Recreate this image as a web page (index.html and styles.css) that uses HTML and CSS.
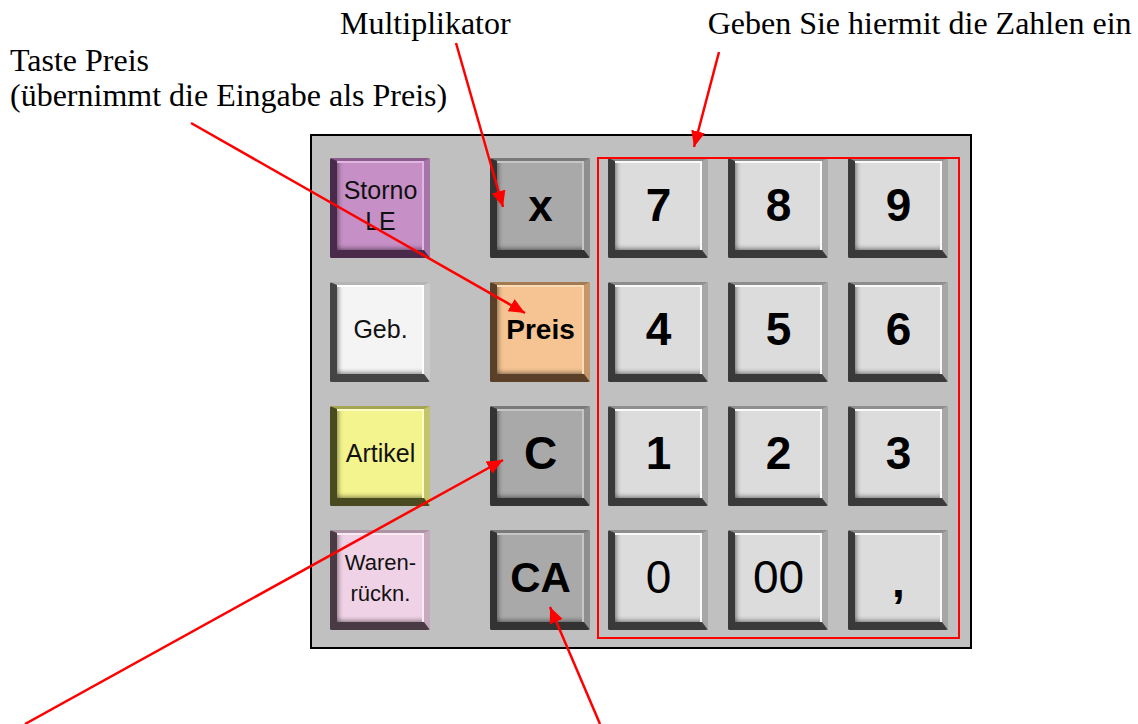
FILE: index.html
```html
<!DOCTYPE html>
<html lang="de">
<head>
    <meta charset="UTF-8">
    <meta name="viewport" content="width=device-width, initial-scale=1.0">
    <title>Kassentastatur</title>
    <link rel="stylesheet" href="styles.css">
</head>
<body>
    <div class="page">
        <div class="notes-top">
            <span class="note">Multiplikator</span>
            <span class="note note-digits">Geben Sie hiermit die Zahlen ein</span>
        </div>
        <div class="note note-price">Taste Preis<br>(übernimmt die Eingabe als Preis)</div>

        <div class="panel">
            <div class="keys keys-func">
                <div class="key key-storno">Storno<br>LE</div>
                <div class="key key-op key-mul">x</div>
                <div class="key key-geb">Geb.</div>
                <div class="key key-preis">Preis</div>
                <div class="key key-artikel">Artikel</div>
                <div class="key key-op key-c">C</div>
                <div class="key key-waren">Waren-<br>rückn.</div>
                <div class="key key-op key-ca">CA</div>
            </div>
            <div class="keys keys-num">
                <div class="key key-num">7</div>
                <div class="key key-num">8</div>
                <div class="key key-num">9</div>
                <div class="key key-num">4</div>
                <div class="key key-num">5</div>
                <div class="key key-num">6</div>
                <div class="key key-num">1</div>
                <div class="key key-num">2</div>
                <div class="key key-num">3</div>
                <div class="key key-num key-thin">0</div>
                <div class="key key-num key-thin">00</div>
                <div class="key key-num key-comma">,</div>
            </div>
        </div>

        <!-- annotation arrows -->
        <svg class="arrows" width="1138" height="724" viewBox="0 0 1138 724">
            <defs>
                <marker id="head" markerWidth="16" markerHeight="14" refX="16" refY="7" orient="auto" markerUnits="userSpaceOnUse">
                    <path d="M0,0 L16,7 L0,14 z" fill="#ff0000"/>
                </marker>
            </defs>
            <line x1="456" y1="43" x2="503" y2="207" marker-end="url(#head)"/>
            <line x1="191" y1="123" x2="525" y2="313" marker-end="url(#head)"/>
            <line x1="719" y1="52" x2="694" y2="147" marker-end="url(#head)"/>
            <line x1="25" y1="724" x2="503" y2="460" marker-end="url(#head)"/>
            <line x1="600" y1="724" x2="550" y2="607" marker-end="url(#head)"/>
        </svg>
    </div>
</body>
</html>
```

FILE: styles.css
```css
body {
    margin: 0;
    background-color: #ffffff;
    font-family: "Liberation Serif", "Times New Roman", serif;
}

.page {
    position: relative;
    width: 1138px;
    height: 724px;
    overflow: hidden;
}

.note {
    font-size: 32px;
    color: #000;
}

.notes-top {
    display: flex;
    padding-left: 340px;
    margin-top: 5px;
    line-height: 36px;
}

.note-digits {
    margin-left: 197px;
}

.note-price {
    padding-left: 10px;
    margin-top: 2px;
    line-height: 35px;
}

.panel {
    box-sizing: border-box;
    display: flex;
    align-items: flex-start;
    gap: 18px;
    width: 662px;
    height: 515px;
    margin: 21px 0 0 310px;
    padding: 22px 0 0 18px;
    background-color: #c0c0c0;
    border: 2px solid #000;
}

.keys {
    display: grid;
    grid-template-rows: repeat(4, 100px);
    row-gap: 24px;
}

.keys-func {
    grid-template-columns: 100px 100px;
    column-gap: 60px;
}

.keys-num {
    position: relative;
    grid-template-columns: repeat(3, 100px);
    column-gap: 20px;
}

/* red marking round the number block */
.keys-num::after {
    content: "";
    position: absolute;
    top: -1px;
    left: -11px;
    right: -12px;
    bottom: -9px;
    border: 2px solid #ff0000;
}

.key {
    --face: #dcdcdc;
    --hi: #fafafa;
    --edge: #8e8e8e;
    --side: #a6a6a6;
    --dark: #3a3a3a;
    box-sizing: border-box;
    display: flex;
    align-items: center;
    justify-content: center;
    text-align: center;
    width: 100px;
    height: 100px;
    font-family: "Liberation Sans", Arial, sans-serif;
    font-size: 25px;
    line-height: 31px;
    color: #111;
    background-color: var(--face);
    border-style: solid;
    border-width: 3px 6px 8px 7px;
    border-color: var(--edge) var(--side) var(--dark) var(--dark);
    border-radius: 2px;
    box-shadow:
        inset -2px 2px 0 var(--hi),
        inset 4px 0 4px -2px rgba(0, 0, 0, 0.35),
        inset 0 -4px 4px -2px rgba(0, 0, 0, 0.35);
}

.key-storno {
    --face: #c690c6;
    --hi: #e2b6e2;
    --edge: #8c5c8c;
    --side: #a674a6;
    --dark: #4a2a4a;
}

.key-geb {
    --face: #f4f4f4;
    --hi: #ffffff;
    --edge: #b4b4b4;
    --side: #cacaca;
    --dark: #444444;
}

.key-artikel {
    --face: #f4f48e;
    --hi: #fcfcc4;
    --edge: #a4a452;
    --side: #c4c46a;
    --dark: #4a4a20;
}

.key-waren {
    --face: #f0d2e6;
    --hi: #faeaf4;
    --edge: #ac94a4;
    --side: #c4aabc;
    --dark: #4a3a44;
    font-size: 22px;
}

.key-preis {
    --face: #f5c492;
    --hi: #fcdcb6;
    --edge: #a47a52;
    --side: #c4966a;
    --dark: #5a4028;
    font-size: 28px;
    font-weight: bold;
    color: #000;
}

.key-op {
    --face: #a9a9a9;
    --hi: #c6c6c6;
    --edge: #7a7a7a;
    --side: #8e8e8e;
    --dark: #333333;
    color: #000;
}

.key-mul {
    font-size: 44px;
    font-weight: bold;
}

.key-c {
    font-size: 46px;
    font-weight: bold;
}

.key-ca {
    font-size: 42px;
    font-weight: bold;
}

.key-num {
    font-size: 46px;
    font-weight: bold;
    color: #000;
}

.key-thin {
    font-weight: normal;
}

.key-comma {
    padding-top: 8px;
}

.arrows {
    position: absolute;
    top: 0;
    left: 0;
    pointer-events: none;
}

.arrows line {
    stroke: #ff0000;
    stroke-width: 2.5;
}
```
